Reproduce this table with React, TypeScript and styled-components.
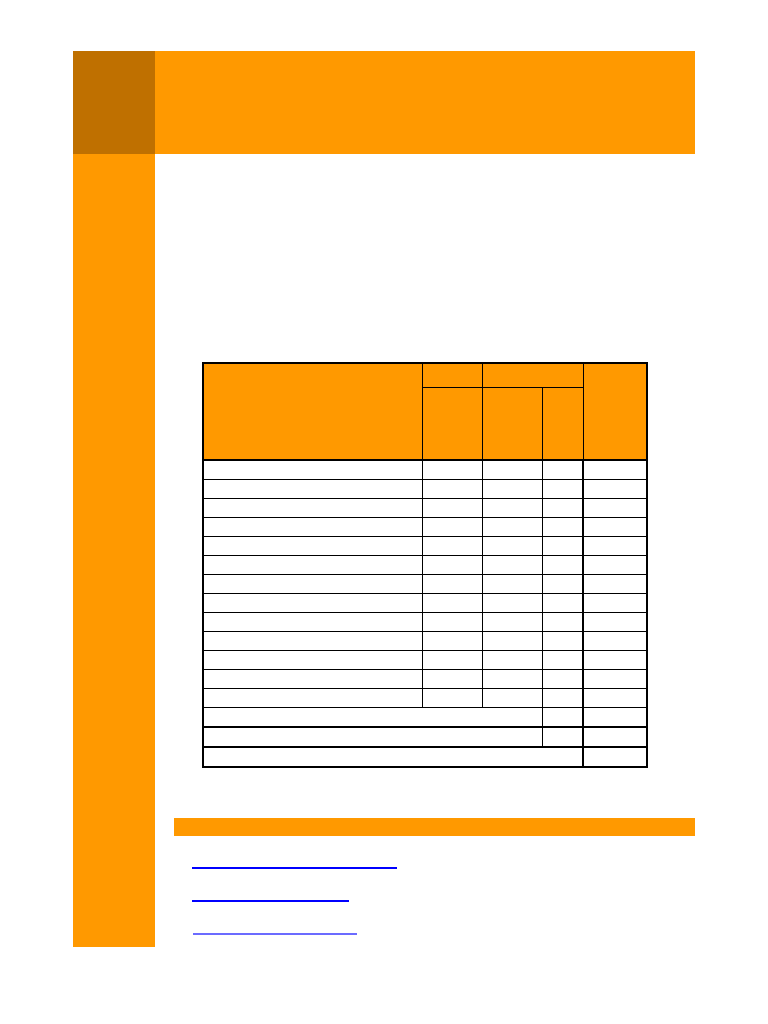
import React from "react";
import styled, { createGlobalStyle } from "styled-components";

const ORANGE = "#ff9900";
const DARK = "#bf7000";

const Global = createGlobalStyle`
  html, body { margin: 0; padding: 0; background: #ffffff; }
  body { font-family: "Liberation Sans", Arial, sans-serif; font-size: 13px; color: #000; }
`;

const Page = styled.div`
  display: grid;
  grid-template-columns: 82px 540px;
  grid-template-rows: 103px auto;
  padding: 51px 0 0 73px;
`;

const Corner = styled.div`
  background: ${DARK};
`;

const Banner = styled.header`
  background: ${ORANGE};
`;

const Sidebar = styled.aside`
  background: ${ORANGE};
  height: 793px;
`;

const Content = styled.main`
  display: flex;
  flex-direction: column;
  padding-top: 208px;
`;

const Table = styled.table`
  margin-left: 47px;
  width: 444px;
  table-layout: fixed;
  border-collapse: collapse;
  border: 2px solid #000;
`;

const HeadCell = styled.th`
  background: ${ORANGE};
  border: 1px solid #000;
  border-bottom-width: 2px;
  padding: 0;
`;

const SubHeadCell = styled.th<{ $top?: boolean }>`
  background: ${ORANGE};
  border: 1px solid #000;
  ${(p) => (p.$top ? "" : "border-bottom-width: 2px;")}
  padding: 0;
`;

const Row = styled.tr<{ $h: number; $thickTop?: boolean }>`
  height: ${(p) => p.$h}px;
  & > td {
    ${(p) => (p.$thickTop ? "border-top-width: 2px;" : "")}
  }
`;

const Cell = styled.td<{ $thickLeft?: boolean }>`
  border: 1px solid #000;
  ${(p) => (p.$thickLeft ? "border-left-width: 2px;" : "")}
  padding: 0;
`;

const Bar = styled.div`
  margin: 50px 0 0 19px;
  height: 18px;
  background: ${ORANGE};
`;

const Links = styled.nav`
  display: flex;
  flex-direction: column;
  padding: 0 0 0 37px;
`;

const Link = styled.a<{ $w: number; $offset?: number; $visited?: boolean }>`
  display: block;
  width: ${(p) => p.$w}px;
  height: 31px;
  margin-left: ${(p) => p.$offset ?? 0}px;
  border-bottom: 2px solid ${(p) => (p.$visited ? "#6b6bff" : "#0000ff")};
  text-decoration: none;
`;

export default function App() {
  const bodyRows = Array.from({ length: 13 });
  return (
    <>
      <Global />
      <Page>
        <Corner />
        <Banner />
        <Sidebar />
        <Content>
          <Table>
            <colgroup>
              <col style={{ width: 219 }} />
              <col style={{ width: 60 }} />
              <col style={{ width: 60 }} />
              <col style={{ width: 41 }} />
              <col style={{ width: 64 }} />
            </colgroup>
            <thead>
              <tr style={{ height: 24 }}>
                <HeadCell rowSpan={2} />
                <SubHeadCell $top />
                <SubHeadCell $top colSpan={2} />
                <HeadCell rowSpan={2} />
              </tr>
              <tr style={{ height: 73 }}>
                <SubHeadCell />
                <SubHeadCell />
                <SubHeadCell />
              </tr>
            </thead>
            <tbody>
              {bodyRows.map((_, i) => (
                <Row key={i} $h={19}>
                  <Cell />
                  <Cell />
                  <Cell />
                  <Cell />
                  <Cell $thickLeft />
                </Row>
              ))}
              <Row $h={20}>
                <Cell colSpan={3} />
                <Cell />
                <Cell $thickLeft />
              </Row>
              <Row $h={20} $thickTop>
                <Cell colSpan={3} />
                <Cell />
                <Cell $thickLeft />
              </Row>
              <Row $h={20} $thickTop>
                <Cell colSpan={4} />
                <Cell $thickLeft />
              </Row>
            </tbody>
          </Table>
          <Bar />
          <Links>
            <Link href="#" $w={205} aria-label="link 1" />
            <Link href="#" $w={157} aria-label="link 2" />
            <Link href="#" $w={164} $offset={1} $visited aria-label="link 3" />
          </Links>
        </Content>
      </Page>
    </>
  );
}
